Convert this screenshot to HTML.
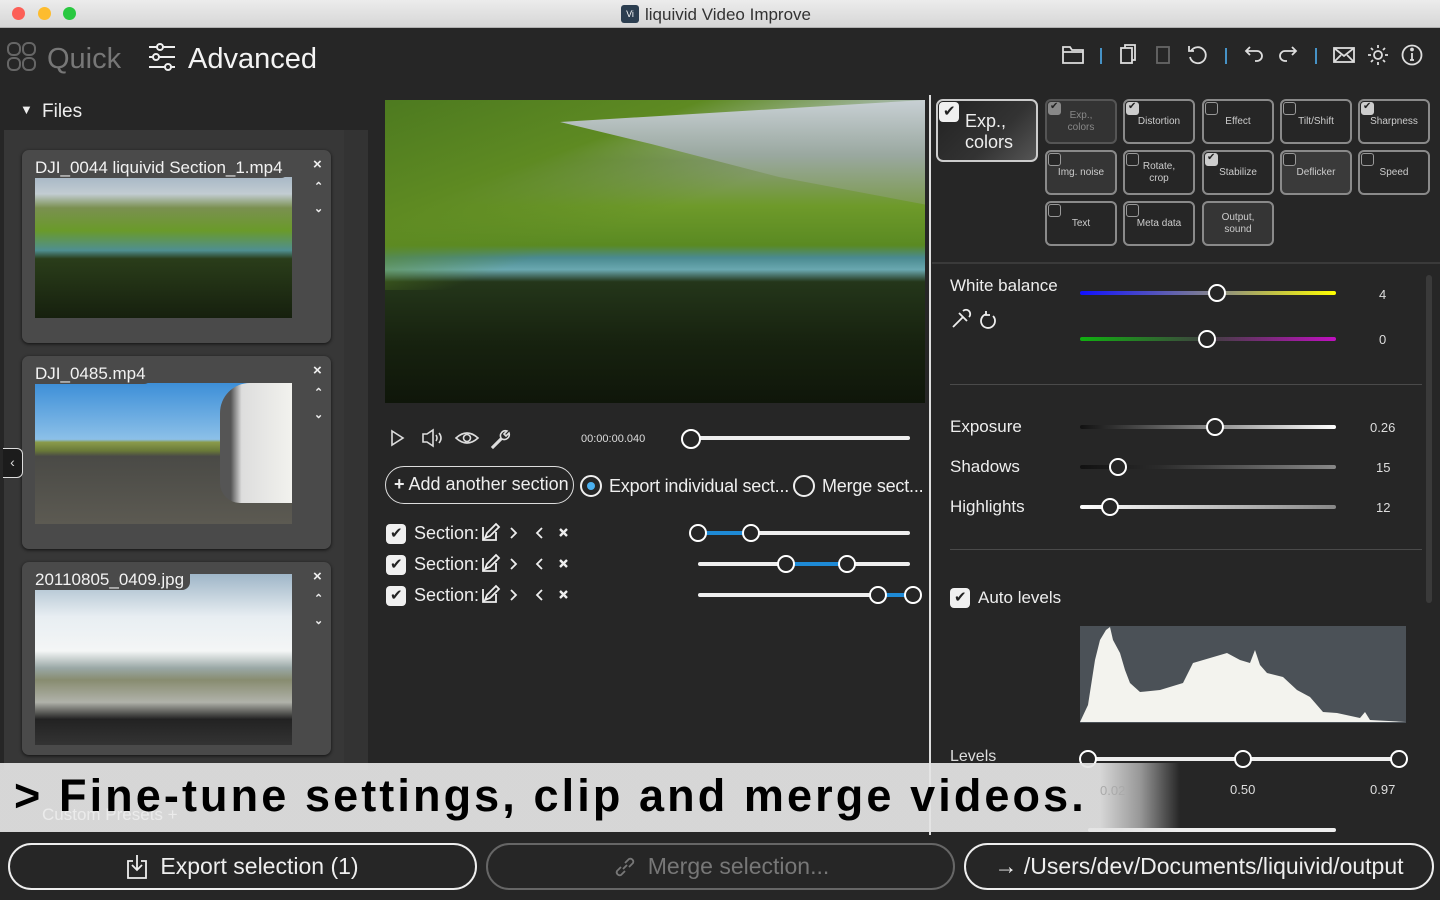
<!DOCTYPE html>
<html><head><meta charset="utf-8"><style>
*{margin:0;padding:0;box-sizing:border-box}
body{width:1440px;height:900px;overflow:hidden;background:#262626;font-family:"Liberation Sans",sans-serif;color:#eee;position:relative}
.a{position:absolute}
.t{position:absolute;white-space:nowrap}
.card{position:absolute;left:22px;width:309px;height:193px;background:#4a4a4a;border-radius:7px;box-shadow:0 1px 3px #111}
.card .n{position:absolute;left:13px;top:8px;font-size:17px;color:#f2f2f2;background:#4a4a4a;padding-right:6px;border-radius:0 0 8px 0;z-index:2}
.card .img{position:absolute;left:13px;top:27px;width:257px;height:141px}
.card .x{position:absolute;left:291px;top:6px;font-size:15px;font-weight:bold;color:#eee}
.card .u{position:absolute;left:292px;top:30px;font-size:11px;color:#eee;font-weight:bold}
.card .d{position:absolute;left:292px;top:52px;font-size:11px;color:#eee;font-weight:bold}
.trk{position:absolute;height:4px;border-radius:2px}
.th{position:absolute;width:18px;height:18px;border-radius:50%;border:2.5px solid #fff;background:#262626}
.tile{position:absolute;width:72px;height:45px;border:2px solid #8a8a8a;border-radius:6px;background:#262626;font-size:10px;color:#ccc;text-align:center;display:flex;align-items:center;justify-content:center;line-height:12px}
.cb{position:absolute;left:1px;top:1px;width:13px;height:13px;border:1.5px solid #999;border-radius:3px;background:#262626}
.cb.on{background:#ccc;border-color:#ccc}
.cb.on:after{content:"✔";position:absolute;left:1px;top:-2px;font-size:10px;color:#222}
.chk{position:absolute;width:20px;height:20px;border-radius:4px;background:#f0f0f0}
.chk:after{content:"✔";position:absolute;left:4px;top:0px;font-size:15px;color:#222}
.btn{position:absolute;top:843px;height:47px;border:2px solid #eee;border-radius:24px;font-size:23px;display:flex;align-items:center;justify-content:center}
</style></head><body>
<!-- title bar -->
<div class="a" style="left:0;top:0;width:1440px;height:28px;background:linear-gradient(#ececec,#d6d6d6);border-bottom:1px solid #b0b0b0"></div>
<div class="a" style="left:12px;top:7px;width:13px;height:13px;border-radius:50%;background:#fc5f57"></div>
<div class="a" style="left:38px;top:7px;width:13px;height:13px;border-radius:50%;background:#fdbc2e"></div>
<div class="a" style="left:63px;top:7px;width:13px;height:13px;border-radius:50%;background:#29c840"></div>
<div class="a" style="left:621px;top:5px;width:18px;height:18px;border-radius:3px;background:#2c3e50;font-size:9px;color:#fff;text-align:center;line-height:18px">Vi</div>
<div class="t" style="left:645px;top:5px;font-size:17px;color:#333">liquivid Video Improve</div>

<!-- header -->
<svg class="a" style="left:7px;top:42px" width="30" height="30" viewBox="0 0 30 30" fill="none" stroke="#666" stroke-width="2"><rect x="1" y="1" width="12" height="12" rx="5"/><rect x="16" y="1" width="12" height="12" rx="5"/><rect x="1" y="16" width="12" height="12" rx="5"/><rect x="16" y="16" width="12" height="12" rx="5"/></svg>
<div class="t" style="left:47px;top:43px;font-size:29px;color:#777">Quick</div>
<svg class="a" style="left:148px;top:43px" width="28" height="28" viewBox="0 0 28 28" stroke="#eee" stroke-width="2" fill="#262626"><path d="M1 4h26M1 14h26M1 24h26"/><circle cx="12" cy="4" r="3"/><circle cx="8" cy="14" r="3"/><circle cx="20" cy="24" r="3"/></svg>
<div class="t" style="left:188px;top:43px;font-size:29px;color:#f4f4f4">Advanced</div>

<!-- toolbar icons -->
<svg class="a" style="left:1060px;top:42px" width="370" height="26" viewBox="0 0 370 26" fill="none" stroke="#ddd" stroke-width="1.8">
<path d="M3 5h7l2 3h11v13H3z M3 10h20"/>
<path d="M41 6v16" stroke="#4a9fd8"/>
<rect x="61" y="6" width="11" height="15"/><path d="M65 6V3h10v15h-3"/>
<rect x="97" y="5" width="12" height="16" stroke="#666"/>
<path d="M131 9a8 8 0 1 1-1 6M129 4v5h5"/>
<path d="M166 6v16" stroke="#4a9fd8"/>
<path d="M186 9h11a5 5 0 0 1 0 10h-2M190 5l-4 4 4 4"/>
<path d="M236 9h-11a5 5 0 0 0 0 10h2M232 5l4 4-4 4"/>
<path d="M256 6v16" stroke="#4a9fd8"/>
<rect x="274" y="6" width="20" height="14"/><path d="M274 6l10 8 10-8M274 20l7-7M294 20l-7-7"/>
<circle cx="318" cy="13" r="4"/><path d="M318 3v3M318 20v3M308 13h3M325 13h3M311 6l2 2M323 18l2 2M311 20l2-2M323 8l2-2"/>
<circle cx="352" cy="13" r="9.5"/><path d="M352 11v7M350 18h4" /><circle cx="352" cy="7.5" r="1" fill="#ddd"/>
</svg>

<!-- files -->
<div class="t" style="left:20px;top:102px;font-size:13px;color:#eee">▼</div>
<div class="t" style="left:42px;top:101px;font-size:19px;color:#eee">Files</div>
<div class="a" style="left:4px;top:130px;width:364px;height:640px;background:#333"></div>
<div class="a" style="left:4px;top:130px;width:340px;height:640px;background:#373737"></div>

<div class="card" style="top:150px"><div class="n">DJI_0044 liquivid Section_1.mp4</div>
<div class="img" style="background:linear-gradient(180deg,#a8b8c6 0%,#c2ccd2 12%,#7a9050 22%,#6a9a2a 38%,#4f8f90 52%,#2a3d1a 58%,#16200e 100%)"></div>
<div class="x">×</div><div class="u">⌃</div><div class="d">⌄</div></div>

<div class="card" style="top:356px"><div class="n">DJI_0485.mp4</div>
<div class="img" style="background:linear-gradient(180deg,#3d8fd8 0%,#8cc0e8 40%,#8a9a4a 42%,#6a7a38 48%,#4a4a46 52%,#5c5a52 100%)"><div class="a" style="left:185px;top:0;width:72px;height:120px;background:linear-gradient(90deg,#555 0 15%,#ddd 30%,#f2f2ee);border-radius:30px 0 0 20px"></div></div>
<div class="x">×</div><div class="u">⌃</div><div class="d">⌄</div></div>

<div class="card" style="top:562px"><div class="n">20110805_0409.jpg</div>
<div class="img" style="top:12px;height:171px;background:linear-gradient(180deg,#9fb6c8 0%,#e8eef2 25%,#f4f6f6 45%,#9aa8a6 55%,#888c70 62%,#b0b2aa 75%,#222 85%,#333 100%)"></div>
<div class="x">×</div><div class="u">⌃</div><div class="d">⌄</div></div>

<div class="a" style="left:3px;top:448px;width:20px;height:30px;border:1.5px solid #ddd;border-left:none;border-radius:0 6px 6px 0;background:#1c1c1c;color:#ddd;font-size:14px;text-align:center;line-height:27px">‹</div>

<!-- video -->
<div class="a" style="left:385px;top:100px;width:540px;height:303px;background:linear-gradient(180deg,#b8c4cc 0%,#d0d6d8 10%,#8a9a80 20%,#6e9a2a 35%,#5a8a22 48%,#4a8a90 52%,#6aa8b0 56%,#24361a 60%,#17220f 80%,#0f160a 100%)"></div>
<div class="a" style="left:385px;top:100px;width:540px;height:190px;background:linear-gradient(160deg,#4d7a20 0%,#5e8a22 30%,transparent 55%)"></div>
<div class="a" style="left:560px;top:100px;width:365px;height:110px;background:linear-gradient(180deg,#c8d0d4,#9aa8a0 50%,#7a9a48);clip-path:polygon(0 20%,100% 0,100% 95%,60% 70%,25% 40%)"></div>

<!-- player controls -->
<svg class="a" style="left:388px;top:426px" width="130" height="24" viewBox="0 0 130 24" fill="none" stroke="#ddd" stroke-width="1.6">
<path d="M4 5l11 7-11 7z"/>
<path d="M35 8h4l6-4v16l-6-4h-4z M48 9q2 3 0 6M51 7q4 5 0 10"/>
<path d="M68 12q11-10 22 0q-11 10-22 0z"/><circle cx="79" cy="12" r="3.5"/>
<path d="M104 21l9-9a5 5 0 0 1 6-7l-3 3 2 2 3-3a5 5 0 0 1-7 6l-9 9z"/>
</svg>
<div class="t" style="left:581px;top:433px;font-size:11px;color:#ddd">00:00:00.040</div>
<div class="trk" style="left:690px;top:436px;width:220px;background:#eee"></div>
<div class="th" style="left:681px;top:429px;width:20px;height:20px"></div>

<div class="a" style="left:385px;top:466px;width:189px;height:38px;border:1.5px solid #ddd;border-radius:19px"></div>
<div class="t" style="left:394px;top:474px;font-size:18px;color:#eee"><b>+</b> Add another section</div>
<div class="a" style="left:580px;top:475px;width:22px;height:22px;border:2px solid #eee;border-radius:50%"></div>
<div class="a" style="left:587px;top:482px;width:8px;height:8px;border-radius:50%;background:#4ab0f0"></div>
<div class="t" style="left:609px;top:476px;font-size:18px;color:#eee;letter-spacing:-0.2px">Export individual sect...</div>
<div class="a" style="left:793px;top:475px;width:22px;height:22px;border:2px solid #eee;border-radius:50%"></div>
<div class="t" style="left:822px;top:476px;font-size:18px;color:#eee;letter-spacing:-0.2px">Merge sect...</div>

<!-- sections -->
<div class="chk" style="left:386px;top:524px"></div><div class="t" style="left:414px;top:523px;font-size:18px;color:#eee">Section:</div>
<div class="chk" style="left:386px;top:555px"></div><div class="t" style="left:414px;top:554px;font-size:18px;color:#eee">Section:</div>
<div class="chk" style="left:386px;top:586px"></div><div class="t" style="left:414px;top:585px;font-size:18px;color:#eee">Section:</div>
<svg class="a" style="left:480px;top:522px" width="92" height="84" viewBox="0 0 92 84" fill="none" stroke="#eee" stroke-width="1.8">
<g id="r"><path d="M3 5v13h13v-8M5 16l2-5 9-9 3 3-9 9z"/><path d="M31 6l5 5-5 5M62 6l-5 5 5 5"/><path d="M80 7l7 7M87 7l-7 7" stroke-width="2.4"/></g>
<use href="#r" y="31"/><use href="#r" y="62"/>
</svg>
<div class="trk" style="left:698px;top:531px;width:212px;background:#eee"></div><div class="trk" style="left:698px;top:531px;width:53px;background:#1e8ad6"></div>
<div class="th" style="left:689px;top:524px"></div><div class="th" style="left:742px;top:524px"></div>
<div class="trk" style="left:698px;top:562px;width:212px;background:#eee"></div><div class="trk" style="left:786px;top:562px;width:61px;background:#1e8ad6"></div>
<div class="th" style="left:777px;top:555px"></div><div class="th" style="left:838px;top:555px"></div>
<div class="trk" style="left:698px;top:593px;width:212px;background:#eee"></div><div class="trk" style="left:878px;top:593px;width:34px;background:#1e8ad6"></div>
<div class="th" style="left:869px;top:586px"></div><div class="th" style="left:904px;top:586px"></div>

<!-- divider -->
<div class="a" style="left:929px;top:95px;width:2px;height:740px;background:#ddd"></div>

<!-- tiles -->
<div class="a" style="left:936px;top:99px;width:102px;height:63px;border:2px solid #ccc;border-radius:7px;background:linear-gradient(135deg,#222,#333 60%,#555)"></div>
<div class="chk" style="left:939px;top:102px"></div>
<div class="t" style="left:965px;top:111px;font-size:18px;color:#eee;line-height:21px">Exp.,<br>colors</div>
<div class="tile" style="left:1045px;top:99px;color:#888;border-color:#555;background:#333">Exp.,<br>colors<div class="cb on" style="background:#888;border-color:#888"></div></div>
<div class="tile" style="left:1123px;top:99px">Distortion<div class="cb on"></div></div>
<div class="tile" style="left:1202px;top:99px">Effect<div class="cb"></div></div>
<div class="tile" style="left:1280px;top:99px">Tilt/Shift<div class="cb"></div></div>
<div class="tile" style="left:1358px;top:99px">Sharpness<div class="cb on"></div></div>
<div class="tile" style="left:1045px;top:150px;background:#353535">Img. noise<div class="cb"></div></div>
<div class="tile" style="left:1123px;top:150px">Rotate,<br>crop<div class="cb"></div></div>
<div class="tile" style="left:1202px;top:150px">Stabilize<div class="cb on"></div></div>
<div class="tile" style="left:1280px;top:150px;background:#3a3a3a">Deflicker<div class="cb"></div></div>
<div class="tile" style="left:1358px;top:150px">Speed<div class="cb"></div></div>
<div class="tile" style="left:1045px;top:201px">Text<div class="cb"></div></div>
<div class="tile" style="left:1123px;top:201px">Meta data<div class="cb"></div></div>
<div class="tile" style="left:1202px;top:201px;background:#353535">Output,<br>sound</div>
<div class="a" style="left:932px;top:262px;width:508px;height:2px;background:#3a3a3a"></div>

<!-- adjustments -->
<div class="a" style="left:1426px;top:275px;width:6px;height:328px;background:#3a3a3a;border-radius:3px"></div>
<div class="t" style="left:950px;top:276px;font-size:17px;color:#eee">White balance</div>
<svg class="a" style="left:950px;top:308px" width="50" height="22" viewBox="0 0 50 22" fill="none" stroke="#eee" stroke-width="1.8"><path d="M3 19l10-10M9 5l8 8M13 3a3 3 0 0 1 6 6" /><path d="M43 8a7 7 0 1 1-6-2M36 3v4h4"/></svg>
<div class="trk" style="left:1080px;top:291px;width:256px;background:linear-gradient(90deg,#1010ff,#808090 50%,#ffff00)"></div>
<div class="th" style="left:1208px;top:284px"></div><div class="t" style="left:1379px;top:287px;font-size:13px;color:#ddd">4</div>
<div class="trk" style="left:1080px;top:337px;width:256px;background:linear-gradient(90deg,#10b010,#404040 50%,#c010c0)"></div>
<div class="th" style="left:1198px;top:330px"></div><div class="t" style="left:1379px;top:332px;font-size:13px;color:#ddd">0</div>
<div class="a" style="left:950px;top:384px;width:472px;height:1px;background:#4a4a4a"></div>
<div class="t" style="left:950px;top:417px;font-size:17px;color:#eee">Exposure</div>
<div class="trk" style="left:1080px;top:425px;width:256px;background:linear-gradient(90deg,#111,#888 50%,#fff)"></div>
<div class="th" style="left:1206px;top:418px"></div><div class="t" style="left:1370px;top:420px;font-size:13px;color:#ddd">0.26</div>
<div class="t" style="left:950px;top:457px;font-size:17px;color:#eee">Shadows</div>
<div class="trk" style="left:1080px;top:465px;width:256px;background:linear-gradient(90deg,#111,#2a2a2a 30%,#888)"></div>
<div class="th" style="left:1109px;top:458px"></div><div class="t" style="left:1376px;top:460px;font-size:13px;color:#ddd">15</div>
<div class="t" style="left:950px;top:497px;font-size:17px;color:#eee">Highlights</div>
<div class="trk" style="left:1080px;top:505px;width:256px;background:linear-gradient(90deg,#fff,#888)"></div>
<div class="th" style="left:1101px;top:498px"></div><div class="t" style="left:1376px;top:500px;font-size:13px;color:#ddd">12</div>
<div class="a" style="left:950px;top:549px;width:472px;height:1px;background:#4a4a4a"></div>
<div class="chk" style="left:950px;top:588px"></div>
<div class="t" style="left:978px;top:588px;font-size:17px;color:#eee">Auto levels</div>
<svg class="a" style="left:1080px;top:626px" width="326" height="97" viewBox="1080 626 326 97"><rect x="1080" y="626" width="326" height="97" fill="#4b5157"/><path fill="#f3f3ee" d="M1080 722L1088 705 1095 660 1100 640 1106 630 1110 627 1113 640 1120 653 1125 670 1130 683 1140 692 1160 690 1183 683 1193 663 1210 658 1227 653 1240 660 1250 663 1255 650 1260 665 1267 673 1283 677 1297 690 1310 697 1323 712 1337 713 1360 718 1365 712 1370 720 1406 722z"/></svg>

<!-- beneath overlay -->
<div class="t" style="left:950px;top:748px;font-size:16px;color:#ddd">Levels</div>
<div class="trk" style="left:1088px;top:757px;width:312px;background:#eee"></div>
<div class="th" style="left:1079px;top:750px"></div><div class="th" style="left:1234px;top:750px"></div><div class="th" style="left:1390px;top:750px"></div>
<div class="t" style="left:1230px;top:782px;font-size:13px;color:#ddd">0.50</div>
<div class="t" style="left:1370px;top:782px;font-size:13px;color:#ddd">0.97</div>
<div class="trk" style="left:1088px;top:828px;width:248px;background:#eee"></div>

<!-- overlay -->
<div class="a" style="left:0;top:763px;width:1180px;height:69px;background:linear-gradient(90deg,rgba(228,228,228,.93) 0,rgba(228,228,228,.93) 1100px,rgba(228,228,228,.6) 1140px,rgba(228,228,228,0) 1180px)"></div>
<div class="t" style="left:1100px;top:783px;font-size:13px;color:#aaa">0.02</div>
<div class="t" style="left:42px;top:805px;font-size:17px;color:rgba(255,255,255,.5)">Custom Presets +</div>
<div class="t" style="left:14px;top:770px;font-size:45px;font-weight:bold;color:#000;letter-spacing:3.1px">&gt; Fine-tune settings, clip and merge videos.</div>

<!-- bottom -->
<div class="btn" style="left:8px;width:469px;color:#eee"><svg width="22" height="26" viewBox="0 0 22 26" fill="none" stroke="#eee" stroke-width="1.8" style="margin-right:12px"><path d="M7 7H2v17h18V7h-5M11 1v15M6 11l5 5 5-5"/></svg>Export selection (1)</div>
<div class="btn" style="left:486px;width:469px;color:#777;border-color:#666"><svg width="26" height="26" viewBox="0 0 26 26" fill="none" stroke="#777" stroke-width="1.8" style="margin-right:10px"><path d="M11 15l4-4M9 13l-4 4a3 3 0 0 0 4 4l4-4M17 13l4-4a3 3 0 0 0-4-4l-4 4"/></svg>Merge selection...</div>
<div class="btn" style="left:964px;width:470px;color:#eee">→ /Users/dev/Documents/liquivid/output</div>
</body></html>
